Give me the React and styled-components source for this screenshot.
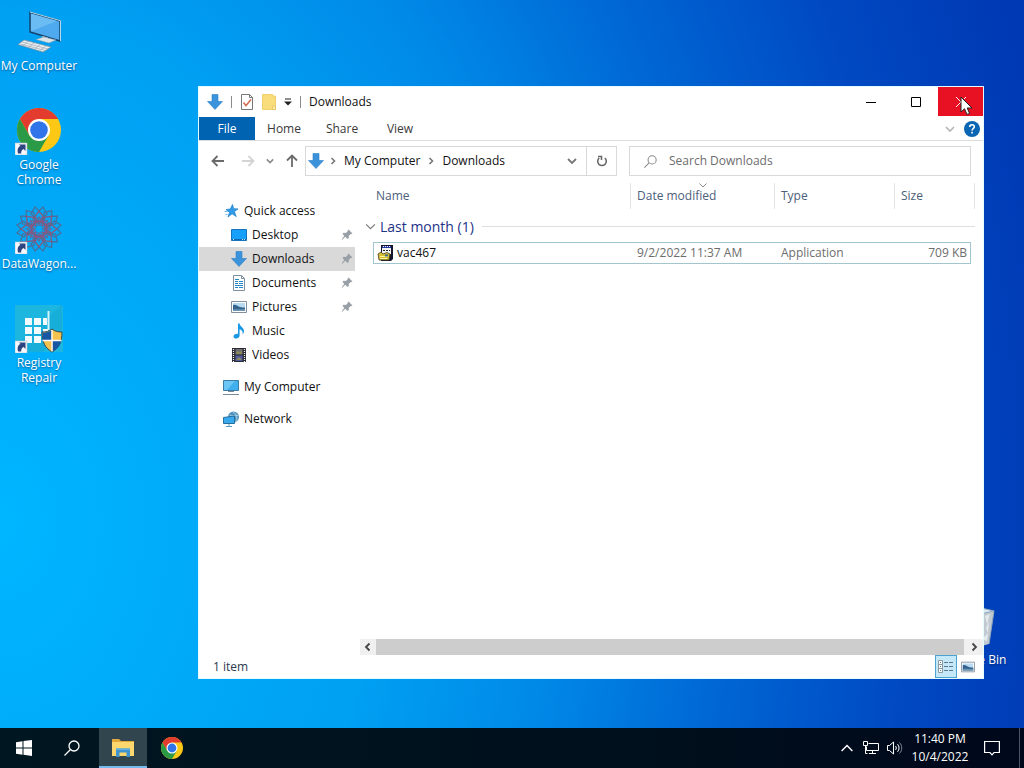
import React from "react"
import styled, { createGlobalStyle } from "styled-components"

const GlobalStyle = createGlobalStyle`
  * {
    box-sizing: border-box;
  }

  body {
    margin: 0;
    overflow: hidden;
  }

  body,
  button,
  input {
    font-family: "Open Sans", "Noto Sans", sans-serif;
    font-size: 12px;
    line-height: 16px;
  }

  button {
    border: 0;
    padding: 0;
    background: none;
    color: inherit;
  }

  a {
    color: inherit;
    text-decoration: none;
  }

  svg {
    display: block;
    flex: none;
  }
`

const Screen = styled.div`
  display: flex;
  flex-direction: column;
  height: 100vh;
  background: radial-gradient(
    ellipse 108% 195% at 0 68%,
    #00b6ff 0%,
    #00a0f3 34%,
    #0089e7 50%,
    #0068d5 65%,
    #0049c2 82%,
    #0039b4 97%
  );
`

const Desktop = styled.main`
  position: relative;
  flex: 1;
  min-height: 0;
`

const IconColumn = styled.div`
  display: flex;
  flex-direction: column;
  width: 78px;
`

const Shortcut = styled.button`
  display: flex;
  flex-direction: column;
  align-items: center;
  gap: 2px;
  width: 78px;
  height: 99px;
  padding-top: 8px;
  color: #fff;
  line-height: 15px;
  text-shadow: 0 1px 2px rgba(0, 30, 80, 0.6);
`

const BinShortcut = styled(Shortcut)`
  position: absolute;
  right: 10px;
  bottom: 35px;
`

/* ---------- explorer window ---------- */

const Window = styled.section`
  position: absolute;
  top: 86px;
  right: 40px;
  bottom: 49px;
  left: 198px;
  display: flex;
  flex-direction: column;
  border: 1px solid #e4fbff;
  background: #fff;
  color: #111;
`

const TitleBar = styled.header`
  display: flex;
  align-items: center;
  height: 30px;
  padding-left: 8px;
`

const QuickTools = styled.div`
  display: flex;
  align-items: center;
  gap: 8px;
  flex: 1;
`

const Separator = styled.span`
  width: 1px;
  height: 12px;
  background: #8c8c8c;
`

const Title = styled.h1`
  margin: 0;
  font-size: 12px;
  font-weight: 400;
`

const WindowButton = styled.button`
  position: relative;
  display: grid;
  place-items: center;
  align-self: flex-start;
  width: 45px;
  height: 29px;
  background: ${(props) => (props.$close ? "#e81123" : "transparent")};
`

const Pointer = styled.svg`
  position: absolute;
  top: 9px;
  left: 22px;
`

const Tabs = styled.nav`
  display: flex;
  align-items: center;
  height: 24px;
  border-bottom: 1px solid #dcdddf;
  color: #3a3a3a;
`

const Tab = styled.button`
  align-self: stretch;
  width: ${(props) => (props.$file ? "56px" : "58px")};
  background: ${(props) => (props.$file ? "#0063b1" : "transparent")};
  color: ${(props) => (props.$file ? "#fff" : "inherit")};
`

const RibbonTools = styled.div`
  display: flex;
  align-items: center;
  gap: 9px;
  margin-left: auto;
  padding-right: 3px;
`

const AddressRow = styled.div`
  display: flex;
  align-items: center;
  height: 40px;
  padding: 0 12px;
`

const History = styled.div`
  display: flex;
  align-items: center;
  justify-content: space-between;
  width: 88px;
  margin-right: 6px;
`

const HistoryPair = styled.div`
  display: flex;
  gap: 16px;
`

const AddressBox = styled.div`
  display: flex;
  align-items: center;
  flex: 1;
  height: 30px;
  padding-left: 2px;
  border: 1px solid #d9d9d9;
`

const Crumbs = styled.div`
  display: flex;
  align-items: center;
  gap: 6px;
  flex: 1;
  padding-left: 4px;
`

const BoxButton = styled.button`
  display: grid;
  place-items: center;
  width: 30px;
  height: 28px;
  border-left: 1px solid ${(props) => (props.$divided ? "#d9d9d9" : "transparent")};
`

const SearchBox = styled.label`
  display: flex;
  align-items: center;
  gap: 12px;
  width: 342px;
  height: 30px;
  margin-left: 12px;
  padding-left: 14px;
  border: 1px solid #d9d9d9;
`

const SearchInput = styled.input`
  flex: 1;
  min-width: 0;
  padding: 0;
  border: 0;
  outline: 0;

  &::placeholder {
    color: #6d6d6d;
    opacity: 1;
  }
`

const Body = styled.div`
  display: flex;
  flex: 1;
  min-height: 0;
`

const Sidebar = styled.nav`
  width: 156px;
  margin-right: 5px;
  padding-top: 18px;
`

const SideLink = styled.a`
  display: flex;
  align-items: center;
  gap: 5px;
  height: 24px;
  margin-top: ${(props) => (props.$spaced ? "8px" : "0")};
  padding: 0 2px 0 ${(props) => (props.$nested ? "32px" : "24px")};
  background: ${(props) => (props.$active ? "#d9d9d9" : "transparent")};
`

const SideLabel = styled.span`
  flex: 1;
  white-space: nowrap;
`

const Content = styled.div`
  display: flex;
  flex-direction: column;
  flex: 1;
  min-width: 0;
`

const FileArea = styled.div`
  flex: 1;
  padding: 2px 8px 0 0;
`

const FileTable = styled.table`
  width: 100%;
  table-layout: fixed;
  border-spacing: 0;
`

const HeadCell = styled.th`
  position: relative;
  height: 26px;
  padding: 0 0 0 ${(props) => (props.$first ? "3px" : "6px")};
  border-right: ${(props) => (props.$line ? "1px solid #e5e5e5" : "0")};
  color: #4c607a;
  font-weight: 400;
  text-align: left;
`

const SortMark = styled.svg`
  position: absolute;
  top: 0;
  left: calc(50% - 4px);
`

const GroupCell = styled.th`
  height: 33px;
  padding: 2px 0 0 5px;
  color: #1e3287;
  font-size: 14px;
  font-weight: 400;
  line-height: 20px;
`

const GroupLabel = styled.div`
  display: flex;
  align-items: center;
  gap: 4px;

  &::after {
    content: "";
    flex: 1;
    height: 1px;
    margin-left: 4px;
    background: #dedede;
  }
`

const Cell = styled.td`
  height: 22px;
  padding: 0 3px 0 6px;
  border: solid #a3c6ce;
  border-width: 1px 0;
  color: #6d6d6d;
  text-align: ${(props) => (props.$right ? "right" : "left")};

  &:nth-child(2) {
    padding-left: 3px;
    border-left-width: 1px;
    color: #111;
  }

  &:nth-child(5) {
    border-right-width: 1px;
  }
`

const FileName = styled.div`
  display: flex;
  align-items: center;
  gap: 4px;
`

const Scrollbar = styled.div`
  display: flex;
  height: 16px;
  background: #f0f0f0;
`

const ScrollButton = styled.button`
  display: grid;
  place-items: center;
  width: ${(props) => (props.$wide ? "19px" : "16px")};
`

const Thumb = styled.div`
  flex: 1;
  background: #cdcdcd;
`

const StatusBar = styled.footer`
  display: flex;
  align-items: center;
  justify-content: space-between;
  height: 23px;
  padding: 0 4px 0 14px;
  color: #2b3a50;
`

const Views = styled.div`
  display: flex;
`

const ViewButton = styled.button`
  display: grid;
  place-items: center;
  width: 22px;
  height: 23px;
  border: 1px solid ${(props) => (props.$on ? "#4ba3cf" : "transparent")};
  background: ${(props) => (props.$on ? "#c4e8f8" : "transparent")};
`

/* ---------- taskbar ---------- */

const Taskbar = styled.footer`
  display: flex;
  justify-content: space-between;
  height: 40px;
  background: linear-gradient(to right, #001620, #00101c 60%, #00081c);
  color: #fff;
`

const TaskGroup = styled.div`
  display: flex;
  align-items: center;
`

const TaskButton = styled.button`
  display: grid;
  place-items: center;
  width: 48px;
  height: 40px;
  margin: ${(props) => (props.$active ? "0 1px 0 3px" : "0")};
  border-bottom: 2px solid ${(props) => (props.$active ? "#76b9ed" : "transparent")};
  border-top: 2px solid transparent;
  background: ${(props) => (props.$active ? "#31454f" : "transparent")};
`

const TrayButton = styled.button`
  display: grid;
  place-items: center;
  width: 24px;
  height: 40px;
`

const Clock = styled.time`
  width: 66px;
  line-height: 18px;
  text-align: center;
`

const NoticeButton = styled(TrayButton)`
  width: 38px;
`

const ShowDesktop = styled.button`
  width: 5px;
  height: 40px;
  margin-left: 8px;
  border-left: 1px solid #4a5462;
`

/* ---------- drawings ---------- */

const ArrowDown = ({ size = 16 }) => (
  <svg width={size} height={size} viewBox="0 0 16 16">
    <path d="M5 0.5h6v7h4.5L8 15.5 0.5 7.500H5z" fill="#3b93dc" stroke="#2b7fc6" strokeWidth="0.6" />
  </svg>
)

const Chevron = ({ d, size = 10, color = "#777", width = 1.6 }) => (
  <svg width={size} height={size} viewBox="0 0 10 10" fill="none" stroke={color} strokeWidth={width}>
    <path d={d} />
  </svg>
)

const DOWN = "M1 3l4 4 4-4"
const RIGHT = "M3.500 2l3 3-3 3"

const LinkBadge = () => (
  <g>
    <path d="M0 36h12v12H0z" fill="#f6f8fb" stroke="#b9c3cc" strokeWidth="0.6" />
    <path d="M3 46.500c-1-4.500.4-6.600 2.600-7.400L4 37.500h6.500V44L8.600 42C6.800 42.800 6 44.400 6.200 46.500z" fill="#2c4480" />
  </g>
)

const ChromeMark = ({ size, x = 0, y = 0 }) => (
  <svg x={x} y={y} width={size} height={size} viewBox="0 0 44 44">
    <circle cx="22" cy="22" r="22" fill="#fbc816" />
    <path d="M2.950 11A22 22 0 0 1 41.050 11H22L12.470 27.500z" fill="#e33b2e" />
    <path d="M2.950 11A22 22 0 0 0 22 44L31.530 27.500H12.470z" fill="#2b9a47" />
    <circle cx="22" cy="22" r="11" fill="#fff" />
    <circle cx="22" cy="22" r="8.800" fill="#2f74e8" />
  </svg>
)

const ComputerArt = () => (
  <svg width="48" height="48" viewBox="0 0 48 48">
    <path d="M15 4.500l30 8.500v20L15 24z" fill="#4fa9ee" stroke="#123f66" strokeWidth="1.400" />
    <path d="M16 5.600l26 7.400L16 23.200z" fill="#6cbcf4" />
    <path d="M15 4l30.500 8.800v20.500" fill="none" stroke="#c7e4f3" strokeWidth="0.900" />
    <path d="M27 28l6 1.600v3.400h-6z" fill="#b4c4cf" />
    <path d="M21 31.500l8-2.500 12 3-7 3z" fill="#dce5ea" stroke="#8aa0ae" strokeWidth="0.600" />
    <path d="M9 32l27 7-8 5L3 36.500z" fill="#e9edf0" stroke="#7f8f9c" strokeWidth="0.700" />
    <path d="M7 34l26 7M5.500 36l25 6.500M13 33.500l-5 4.200M19 35l-5.500 4.200M25 36.600l-5.500 4.200M31 38l-6 4.400" stroke="#9eabb5" strokeWidth="0.700" />
  </svg>
)

const ChromeArt = () => (
  <svg width="48" height="48" viewBox="0 0 48 48">
    <ChromeMark size={44} x={2} y={1} />
    <LinkBadge />
  </svg>
)

const RosetteArt = () => {
  const turns = [0, 45, 90, 135, 180, 225, 270, 315]
  return (
    <svg width="48" height="48" viewBox="0 0 48 48">
      <g fill="none" stroke="#46719f" strokeWidth="1.300">
        {turns.map((turn) => (
          <g key={turn} transform={`rotate(${turn} 24 23)`}>
            <path d="M24 16L16 8l4-7 4 4 4-4 4 7z" />
            <path d="M18 13l6-8 6 8-6 5z" stroke="#85597f" />
            <path d="M20 19l4-8 4 8" stroke="#5d6b9c" />
          </g>
        ))}
        <circle cx="24" cy="23" r="8" stroke="#94507b" />
        <circle cx="24" cy="23" r="4" stroke="#4f75ac" />
      </g>
      <LinkBadge />
    </svg>
  )
}

const RegistryArt = () => (
  <svg width="48" height="48" viewBox="0 0 48 48">
    <path d="M0 0h46l2 2v45H0z" fill="#1cb6de" />
    <path d="M47 0v24L28 47H4L0 40z" fill="#12a6d4" opacity="0.500" />
    <path d="M33.500 6v19" stroke="#d5f4fb" strokeWidth="2" />
    <g fill="#f2fcff">
      <path d="M10 13h7v7h-7zM19 13h7v7h-7zM28 13h4v7h-4z" />
      <path d="M10 22h7v7h-7zM19 22h7v7h-7zM28 24h5v3h-5z" />
      <path d="M10 31h7v7h-7zM19 31h7v7h-7z" />
    </g>
    <path d="M37 24c3 2.500 6 3 10 3 0 10-3 16-10 20-7-4-10-10-10-20 4 0 7-.5 10-3z" fill="#f6c24e" stroke="#37474f" />
    <path d="M36.500 25v10H27.600V27.500c4 0 6.500-.5 8.900-2.500zM37.500 36H46c-1 4.500-3.500 8-8.500 10.400z" fill="#1857a4" />
    <path d="M37 25v21.500M27.500 35.500h19" stroke="#fff" strokeWidth="1.300" />
    <LinkBadge />
  </svg>
)

const BinArt = () => (
  <svg width="48" height="48" viewBox="0 0 48 48">
    <path d="M6 8l20-3 17 4-5 33-15 4-12-4z" fill="#c1c9d1" />
    <path d="M6 8l20-3 17 4-18 4z" fill="#dce8f2" stroke="#8fa8bd" />
    <path d="M34 14l5-2-3 10zM35 26l3-7-1 12zM31 37l6-6-1 8z" fill="#e4e9ed" />
    <path d="M43 9l-5 33" stroke="#8fa4b8" />
  </svg>
)

const StarIcon = () => (
  <svg width="16" height="16" viewBox="0 0 16 16">
    <path d="M9.500 1.500l1.200 4.200 4.300.2-3.600 2.700 1.800 5-4.100-2.800L5 14l1.500-4.600L3 6.600l4.300-.6z" fill="#2f9be8" stroke="#1c7fc9" strokeWidth="0.700" />
    <path d="M1.500 8.500h3M2.500 11.500h2" stroke="#72b9ea" />
  </svg>
)

const DesktopIcon = () => (
  <svg width="16" height="16" viewBox="0 0 16 16">
    <path d="M.5 2.500h15v11H.5z" fill="#17a0fb" stroke="#1674bf" />
    <path d="M1 12.500h14" stroke="#0b67b3" />
    <path d="M2 12.500h1M11 12.500h1M13 12.500h1" stroke="#cdeafd" />
  </svg>
)

const DocumentIcon = () => (
  <svg width="16" height="16" viewBox="0 0 16 16" fill="none">
    <path d="M2.500.5h8l3 3v12h-11z" fill="#fff" stroke="#7d8f9d" />
    <path d="M10.500.5v3h3" stroke="#7d8f9d" />
    <path d="M4 4.500h4M4 6.500h3M8 6.500h4M4 8.500h3M8 8.500h4M4 10.500h8M4 12.500h3M8 12.500h4" stroke="#2488c8" />
  </svg>
)

const PictureIcon = ({ size = 16 }) => (
  <svg width={size} height={size} viewBox="0 0 16 16">
    <path d="M.5 2.500h15v11H.5z" fill="#fff" stroke="#83909b" />
    <path d="M2 4h12v8H2z" fill="#b8dbf2" />
    <path d="M2 6c3-1 5 1.500 7 2s3 .5 5 .5V12H2z" fill="#37648e" />
    <path d="M2 10.500c4-1 7 .5 12-.5v2H2z" fill="#6b96b4" />
  </svg>
)

const MusicIcon = () => (
  <svg width="16" height="16" viewBox="0 0 16 16">
    <path d="M7 .5h1.600c.2 3 4.400 4 4.400 7.500 0 1.500-.6 2.600-1.400 3.500.6-3-.8-4.500-3-5.300v6.300c0 1.800-1.600 3-3.500 3-1.600 0-2.600-.9-2.600-2.100 0-1.700 1.800-2.900 4.500-2.700z" fill="#1b98e4" />
  </svg>
)

const VideoIcon = () => (
  <svg width="16" height="16" viewBox="0 0 16 16">
    <path d="M1 1h14v14H1z" fill="#2b2b33" />
    <path d="M4.500 2h7v5.500h-7z" fill="#6e6d72" />
    <path d="M4.500 8.500h7V14h-7z" fill="#525da0" />
    <path d="M5 6l2-2 2 1.500L11 3v4H5zM5 13l3-3 3 3z" fill="#8f8a5c" />
    <path d="M2.500 2v13M13.500 2v13" stroke="#f2f2f2" strokeWidth="1.200" strokeDasharray="1 1" />
  </svg>
)

const MonitorIcon = () => (
  <svg width="16" height="16" viewBox="0 0 16 16">
    <path d="M.5 1.500h15v10H.5z" fill="#3fafee" stroke="#3a7ca4" />
    <path d="M1 2h11L4 11H1z" fill="#6cc6f5" />
    <path d="M5 12.500h6M0 15.500h16" stroke="#7a8c98" />
  </svg>
)

const NetworkIcon = () => (
  <svg width="16" height="16" viewBox="0 0 16 16">
    <circle cx="10.500" cy="6" r="5.500" fill="#5592bb" />
    <path d="M10 1c4 2 5 7 2.500 10M6.500 4c3 1.200 6 1 9 .2" fill="none" stroke="#a9d2e6" />
    <path d="M.5 6.500l11-1.500v7.500H.5z" fill="#38a9ec" stroke="#256f9f" />
    <path d="M6 13v2M3 15.500h6" stroke="#5f9cc0" />
  </svg>
)

const PinIcon = () => (
  <svg width="12" height="12" viewBox="0 0 12 12">
    <path d="M7.500.5l4 4-1.200.6-.6-.2-2 2 .1 2.200-1.200 1L4.200 7.700.8 11.200l.4-1.400L3.300 6.800 1.500 5l1-1.200 2.400.1 2-2-.2-.6z" fill="#989fa5" />
  </svg>
)

const InstallerIcon = () => (
  <svg width="16" height="16" viewBox="0 0 16 16">
    <path d="M4 0h12v14l-2 2H4z" fill="#15152c" />
    <path d="M5 3h9v6H5z" fill="#f4f4f4" />
    <path d="M5 1h9v2H5z" fill="#2436a0" />
    <path d="M6 1.500h1M8 1.500h1M10 1.500h1M12 1.500h1" stroke="#fff" />
    <path d="M6 5h2v1H6zM9 5h2v1H9zM12 5h1v1h-1z" fill="#222" />
    <path d="M1 9l3-2 2 2 4-1.500 3 1.500-1 6H2z" fill="#d9bf35" stroke="#413d1d" strokeWidth="0.800" />
    <path d="M3 11.500h8M3 13.500h7" stroke="#fff29a" />
    <path d="M8 9.500h3v2H8z" fill="#35707e" />
  </svg>
)

const CheckDocIcon = () => (
  <svg width="14" height="16" viewBox="0 0 14 16" fill="none">
    <path d="M1.500.5h8l3 3v12h-11z" fill="#fff" stroke="#777" />
    <path d="M9.500.5v3h3" stroke="#777" />
    <path d="M3.500 8.500l2.500 3 5-6" stroke="#d46a4f" strokeWidth="1.500" />
  </svg>
)

const FolderIcon = () => (
  <svg width="14" height="16" viewBox="0 0 14 16">
    <path d="M.5.500h10V2h3v13.500H.5z" fill="#f9dc7c" stroke="#efd06a" />
    <path d="M10.500 12h3v3.500h-3z" fill="#fcebaa" stroke="#e0bb4d" strokeWidth="0.600" />
  </svg>
)

const ArrowIcon = ({ turn = 0, color = "#6b6b6b" }) => (
  <svg width="14" height="14" viewBox="0 0 14 14" fill="none" stroke={color} strokeWidth="1.800">
    <path d="M13 7H1.500M6.500 2L1.500 7l5 5" transform={`rotate(${turn} 7 7)`} />
  </svg>
)

const SearchIcon = ({ size, color, width }) => (
  <svg width={size} height={size} viewBox="0 0 16 16" fill="none" stroke={color} strokeWidth={width}>
    <circle cx="10" cy="6" r="5" />
    <path d="M6.500 9.500l-6 6" />
  </svg>
)

const places = [
  { name: "Quick access", icon: <StarIcon /> },
  { name: "Desktop", icon: <DesktopIcon />, nested: true, pinned: true },
  { name: "Downloads", icon: <ArrowDown />, nested: true, pinned: true, active: true },
  { name: "Documents", icon: <DocumentIcon />, nested: true, pinned: true },
  { name: "Pictures", icon: <PictureIcon />, nested: true, pinned: true },
  { name: "Music", icon: <MusicIcon />, nested: true },
  { name: "Videos", icon: <VideoIcon />, nested: true },
  { name: "My Computer", icon: <MonitorIcon />, spaced: true },
  { name: "Network", icon: <NetworkIcon />, spaced: true },
]

const Explorer = () => {
  return (
    <Window aria-label="Downloads">
      <TitleBar>
        <QuickTools>
          <ArrowDown />
          <Separator />
          <button aria-label="Properties"><CheckDocIcon /></button>
          <button aria-label="New folder"><FolderIcon /></button>
          <button aria-label="Customize toolbar">
            <svg width="8" height="8" viewBox="0 0 8 8">
              <path d="M1 .5h6v1H1zM0 3.500h8l-4 4z" fill="#222" />
            </svg>
          </button>
          <Separator />
          <Title>Downloads</Title>
        </QuickTools>
        <WindowButton aria-label="Minimize">
          <svg width="10" height="10" viewBox="0 0 10 10"><path d="M0 5.500h10" stroke="#000" /></svg>
        </WindowButton>
        <WindowButton aria-label="Maximize">
          <svg width="10" height="10" viewBox="0 0 10 10"><path d="M.5.5h9v9h-9z" fill="none" stroke="#000" /></svg>
        </WindowButton>
        <WindowButton $close aria-label="Close">
          <svg width="10" height="10" viewBox="0 0 10 10"><path d="M0 0l10 10M10 0L0 10" stroke="#fff" /></svg>
          <Pointer width="13" height="20" viewBox="0 0 13 20">
            <path d="M1 1v15l3.500-3.300L7 18.500l2.600-1.100L7.200 12H12z" fill="#fff" stroke="#222" />
          </Pointer>
        </WindowButton>
      </TitleBar>

      <Tabs>
        <Tab $file>File</Tab>
        <Tab>Home</Tab>
        <Tab>Share</Tab>
        <Tab>View</Tab>
        <RibbonTools>
          <button aria-label="Expand ribbon"><Chevron d={DOWN} color="#b5b5b5" /></button>
          <button aria-label="Help">
            <svg width="16" height="16" viewBox="0 0 16 16">
              <circle cx="8" cy="8" r="8" fill="#0a66b2" />
              <path d="M5.700 6C5.700 4.400 6.700 3.700 8 3.700s2.300.8 2.300 2c0 1.700-2.200 1.900-2.200 3.800M8.100 10.800v1.700" fill="none" stroke="#fff" strokeWidth="1.600" />
            </svg>
          </button>
        </RibbonTools>
      </Tabs>

      <AddressRow>
        <History>
          <HistoryPair>
            <button aria-label="Back"><ArrowIcon /></button>
            <button aria-label="Forward"><ArrowIcon turn={180} color="#d4d4d4" /></button>
          </HistoryPair>
          <button aria-label="Recent locations"><Chevron d={DOWN} size={8} color="#8b8b8b" width={2} /></button>
          <button aria-label="Up"><ArrowIcon turn={90} /></button>
        </History>
        <AddressBox>
          <ArrowDown />
          <Crumbs>
            <Chevron d={RIGHT} />
            <button>My Computer</button>
            <Chevron d={RIGHT} />
            <button>Downloads</button>
          </Crumbs>
          <BoxButton aria-label="Previous locations"><Chevron d={DOWN} width={1.8} /></BoxButton>
          <BoxButton $divided aria-label="Refresh">
            <svg width="12" height="12" viewBox="0 0 12 12" fill="none" stroke="#666" strokeWidth="1.500">
              <path d="M8.800 3A4.300 4.300 0 1 1 3.200 3M2 1.500h3.500V5" />
            </svg>
          </BoxButton>
        </AddressBox>
        <SearchBox>
          <SearchIcon size={13} color="#8a8a8a" width={1.3} />
          <SearchInput type="text" placeholder="Search Downloads" aria-label="Search Downloads" />
        </SearchBox>
      </AddressRow>

      <Body>
        <Sidebar>
          {places.map((place) => (
            <SideLink
              key={place.name}
              href="#"
              $nested={place.nested}
              $active={place.active}
              $spaced={place.spaced}
            >
              {place.icon}
              <SideLabel>{place.name}</SideLabel>
              {place.pinned && <PinIcon />}
            </SideLink>
          ))}
        </Sidebar>
        <Content>
          <FileArea>
            <FileTable>
              <colgroup>
                <col width="13" />
                <col />
                <col width="144" />
                <col width="120" />
                <col width="76" />
                <col width="4" />
              </colgroup>
              <thead>
                <tr>
                  <td />
                  <HeadCell $first $line>Name</HeadCell>
                  <HeadCell $line>
                    Date modified
                    <SortMark width="8" height="5" viewBox="0 0 8 5">
                      <path d="M.5.500L4 4l3.500-3.500" fill="none" stroke="#8a8a8a" />
                    </SortMark>
                  </HeadCell>
                  <HeadCell $line>Type</HeadCell>
                  <HeadCell>Size</HeadCell>
                  <HeadCell as="td" $first $line />
                </tr>
              </thead>
              <tbody>
                <tr>
                  <GroupCell colSpan="6">
                    <GroupLabel>
                      <Chevron d={DOWN} size={11} width={1} />
                      Last month (1)
                    </GroupLabel>
                  </GroupCell>
                </tr>
                <tr>
                  <td />
                  <Cell>
                    <FileName>
                      <InstallerIcon />
                      vac467
                    </FileName>
                  </Cell>
                  <Cell>9/2/2022 11:37 AM</Cell>
                  <Cell>Application</Cell>
                  <Cell $right>709 KB</Cell>
                  <td />
                </tr>
              </tbody>
            </FileTable>
          </FileArea>
          <Scrollbar>
            <ScrollButton aria-label="Scroll left"><Chevron d="M6.500 1.500L3 5l3.500 3.500" color="#444" width={1.8} /></ScrollButton>
            <Thumb />
            <ScrollButton $wide aria-label="Scroll right"><Chevron d="M3.500 1.500L7 5 3.500 8.500" color="#444" width={1.8} /></ScrollButton>
          </Scrollbar>
        </Content>
      </Body>

      <StatusBar>
        <span>1 item</span>
        <Views>
          <ViewButton $on aria-label="Details view">
            <svg width="16" height="14" viewBox="0 0 16 14" fill="none">
              <path d="M.5.500h4v4h-4zM.5 4.500h4v4h-4zM.5 8.500h4v4h-4z" fill="#fff" stroke="#8a989f" />
              <path d="M2 2.500h1M2 6.500h1M2 10.500h1M6 2.500h4M11 2.500h4M6 6.500h4M11 6.500h4M6 10.500h4M11 10.500h4" stroke="#5d7886" />
            </svg>
          </ViewButton>
          <ViewButton aria-label="Large icons view"><PictureIcon size={14} /></ViewButton>
        </Views>
      </StatusBar>
    </Window>
  )
}

const App = () => {
  return (
    <Screen>
      <GlobalStyle />
      <Desktop>
        <IconColumn>
          <Shortcut><ComputerArt />My Computer</Shortcut>
          <Shortcut><ChromeArt />Google Chrome</Shortcut>
          <Shortcut><RosetteArt />DataWagon...</Shortcut>
          <Shortcut><RegistryArt />Registry Repair</Shortcut>
        </IconColumn>
        <BinShortcut><BinArt />Recycle Bin</BinShortcut>
        <Explorer />
      </Desktop>

      <Taskbar>
        <TaskGroup>
          <TaskButton aria-label="Start">
            <svg width="16" height="16" viewBox="0 0 16 16">
              <path d="M0 2.200l6.500-.9v6.200H0zM7.500 1.100L16 0v7.500H7.500zM0 8.500h6.500v6.200L0 13.800zM7.500 8.500H16V16l-8.500-1.200z" fill="#fff" />
            </svg>
          </TaskButton>
          <TaskButton aria-label="Search"><SearchIcon size={16} color="#fff" width={1.3} /></TaskButton>
          <TaskButton $active aria-label="File Explorer">
            <svg width="22" height="18" viewBox="0 0 22 18">
              <path d="M0 0h7l2 2h13v15H0z" fill="#e3a83c" />
              <path d="M0 3h22v14H0z" fill="#fbd76d" />
              <path d="M4 9.500h14V18h-3.500v-4.500h-7V18H4z" fill="#3f93cf" />
              <path d="M4 9.500h14v1.500H4z" fill="#5fb0df" />
            </svg>
          </TaskButton>
          <TaskButton aria-label="Google Chrome"><ChromeMark size={22} /></TaskButton>
        </TaskGroup>
        <TaskGroup>
          <TrayButton aria-label="Show hidden icons">
            <Chevron d="M.5 7.500L5 3l4.500 4.500" size={12} color="#fff" width={1.2} />
          </TrayButton>
          <TrayButton aria-label="Network">
            <svg width="16" height="14" viewBox="0 0 16 14" fill="none" stroke="#fff">
              <path d="M5.500 2.500h10v7h-12v-4M9.500 9.500v3M6 12.500h7M.5.500h4v4h-4zM2.500 4.500v8h2" />
            </svg>
          </TrayButton>
          <TrayButton aria-label="Volume">
            <svg width="16" height="14" viewBox="0 0 16 14" fill="none" stroke="#fff">
              <path d="M.5 4.500h2l4-3.500v12l-4-3.500h-2zM8.500 5c1 1.200 1 2.800 0 4M10.500 3.200c2 2.200 2 5.400 0 7.600" />
              <path d="M12.500 1.500c3 3.200 3 7.800 0 11" stroke="#7f8895" />
            </svg>
          </TrayButton>
          <Clock>11:40 PM<br />10/4/2022</Clock>
          <NoticeButton aria-label="Notifications">
            <svg width="16" height="16" viewBox="0 0 16 16" fill="none" stroke="#fff" strokeWidth="1.200">
              <path d="M.6 1.500h14.800v11H10L8 14.800 6 12.500H.6z" />
            </svg>
          </NoticeButton>
          <ShowDesktop aria-label="Show desktop" />
        </TaskGroup>
      </Taskbar>
    </Screen>
  )
}

export default App
